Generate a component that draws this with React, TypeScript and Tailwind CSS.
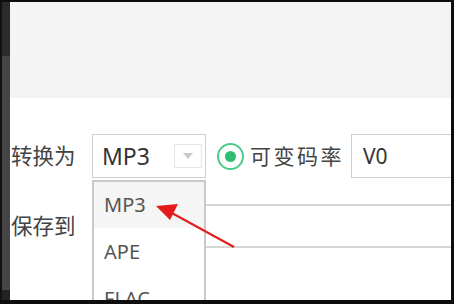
import React from "react";

export default function App() {
  const font = { fontFamily: '"Noto Sans", "Noto Sans CJK SC", sans-serif' };
  return (
    <div className="w-[454px] h-[304px] bg-[#0d0d0d] flex flex-col overflow-hidden" style={font}>
      <div className="h-[2px] shrink-0" />
      <div className="flex flex-1 min-h-0">
        <div className="w-[2px] shrink-0 bg-[#111]" />
        <div className="w-[8px] shrink-0 flex flex-col">
          <div className="h-[54px] bg-[#2b2b2b]" />
          <div className="flex-1 bg-[#454545]" />
          <div className="h-[10px] bg-[#222]" />
        </div>
        <div className="relative flex-1 min-w-0 bg-white flex flex-col overflow-hidden">
          <div className="h-[96px] shrink-0 bg-[#f4f4f4]" />
          <div className="pt-[36px] flex flex-col gap-[26px]">
            <div className="flex items-center h-[44px]">
              <div className="w-[82px] shrink-0 pl-[1px] text-[21.5px] leading-none text-[#444]">转换为</div>
              <div className="w-[114px] h-[44px] shrink-0 border border-[#cfcfcf] flex items-center justify-between pl-[9px] pr-[3px]">
                <span className="text-[23px] text-[#333] leading-none">MP3</span>
                <div className="w-[28px] h-[24px] border border-[#e4e4e4] flex items-center justify-center">
                  <svg width="10" height="6" viewBox="0 0 10 6">
                    <path d="M0 0 L10 0 L5 6 Z" fill="#c8c8c8" />
                  </svg>
                </div>
              </div>
              <div className="ml-[11px] w-[27px] h-[27px] shrink-0 rounded-full border-2 border-[#4ccb86] flex items-center justify-center">
                <div className="w-[11px] h-[11px] rounded-full bg-[#2fbf6e]" />
              </div>
              <div className="ml-[6px] text-[21px] leading-none text-[#444] tracking-[2.5px] whitespace-nowrap">可变码率</div>
              <div className="ml-[7px] h-[44px] w-[140px] shrink-0 border border-[#cfcfcf] flex items-center pl-[11px]">
                <span className="text-[21px] text-[#333] leading-none">V0</span>
              </div>
            </div>
            <div className="flex items-center h-[44px]">
              <div className="w-[82px] shrink-0 pl-[1px] text-[21.5px] leading-none text-[#444]">保存到</div>
              <div className="h-[44px] w-[400px] shrink-0 border-y-2 border-l border-[#d6d6d6]" />
            </div>
          </div>
          <div className="absolute left-[82px] top-[178px] w-[114px] h-[140px] bg-white border-2 border-[#c9c9c9] flex flex-col">
            <div className="h-[46px] shrink-0 bg-[#f5f5f5] flex items-center pl-[10px]">
              <span className="text-[20px] text-[#555] leading-none">MP3</span>
            </div>
            <div className="h-[47px] shrink-0 flex items-center pl-[10px]">
              <span className="text-[20px] text-[#555] leading-none">APE</span>
            </div>
            <div className="h-[47px] shrink-0 flex items-center pl-[10px]">
              <span className="text-[20px] text-[#555] leading-none">FLAC</span>
            </div>
          </div>
          <svg className="absolute left-0 top-0" width="441" height="298" viewBox="0 0 441 298">
            <line x1="224" y1="245" x2="160" y2="210" stroke="#e31b1b" strokeWidth="2" />
            <path d="M146 204 L168 202 L160 218 Z" fill="#e31b1b" />
          </svg>
        </div>
        <div className="w-[3px] shrink-0" />
      </div>
      <div className="h-[4px] shrink-0" />
    </div>
  );
}
